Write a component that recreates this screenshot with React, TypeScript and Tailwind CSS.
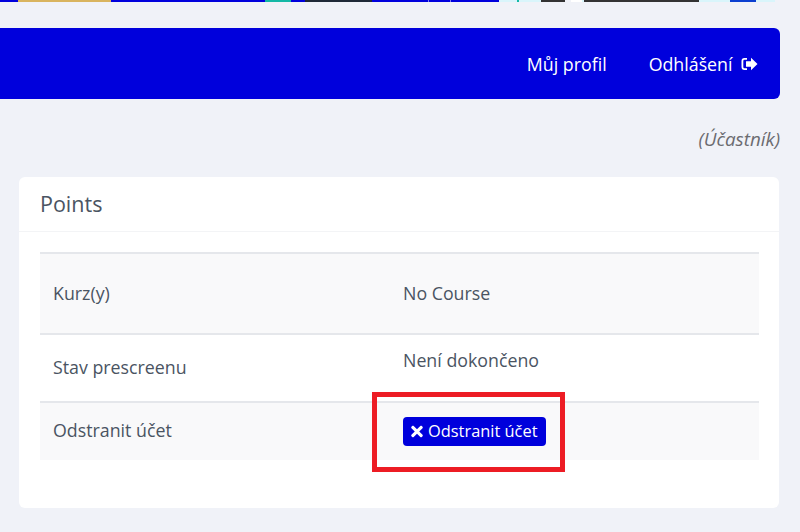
import { FaTimes } from "react-icons/fa";

const strip = [
  { w: 18, c: "#0000dc" },
  { w: 93, c: "#d9b45f" },
  { w: 154, c: "#0000dc" },
  { w: 26, c: "#14b8a6" },
  { w: 14, c: "#0000dc" },
  { w: 67, c: "#1f2937" },
  { w: 56, c: "#0000dc" },
  { w: 1, c: "#8080ee" },
  { w: 21, c: "#0000dc" },
  { w: 1, c: "#8080ee" },
  { w: 48, c: "#0000dc" },
  { w: 18, c: "#d9f5fb" },
  { w: 2, c: "#14b8a6" },
  { w: 22, c: "#d9f5fb" },
  { w: 24, c: "#333333" },
  { w: 6, c: "#f0f2f8" },
  { w: 11, c: "#ffffff" },
  { w: 2, c: "#d9f5fb" },
  { w: 115, c: "#333333" },
  { w: 31, c: "#d9f5fb" },
  { w: 26, c: "#0b3fd0" },
  { w: 19, c: "#d9f5fb" },
];

function LogoutIcon() {
  return (
    <svg viewBox="0 0 17 14" className="ml-[8px] h-[14px] w-[17px]" fill="currentColor">
      <path d="M6 1H3.500A3 3 0 0 0 .5 4v6a3 3 0 0 0 3 3H6v-1.800H3.500A1.200 1.200 0 0 1 2.300 10V4a1.200 1.200 0 0 1 1.200-1.200H6z" />
      <path d="M10 .8 16.500 7 10 13.200V9.800H5V4.200h5z" />
    </svg>
  );
}

export default function App() {
  return (
    <div className="relative h-[532px] w-[800px] overflow-hidden bg-[#f0f2f8] font-['Open_Sans','Noto_Sans',sans-serif] text-[17.8px] text-[#4a5462]">
      <div className="flex h-[2px]">
        {strip.map((s, i) => (
          <div key={i} className="h-full" style={{ width: s.w, backgroundColor: s.c }} />
        ))}
      </div>

      <header className="mt-[26px] mr-[20.5px] flex h-[71px] items-center justify-end rounded-r-md bg-[#0000dc] pt-[1px] pr-[22px] text-white">
        <a className="mr-[42px]">Můj profil</a>
        <a className="flex items-center">
          Odhlášení
          <LogoutIcon />
        </a>
      </header>

      <p className="mt-[29px] mr-[20px] text-right text-[18.8px] italic leading-[22px] text-[#6b6b70]">(Účastník)</p>

      <section className="mr-[21px] ml-[19px] mt-[27px] h-[331px] rounded-md bg-white">
        <h2 className="flex h-[55px] items-center border-b border-[#f3f4f6] px-[21px] text-[21.5px]">Points</h2>
        <div className="pr-[20px] pl-[21px] pt-[20px]">
          <table className="w-full border-collapse">
            <tbody>
              <tr className="h-[81px] border-y-2 border-[#e5e7eb] bg-[#f9f9fa]">
                <td className="w-[363px] pl-[13px]">Kurz(y)</td>
                <td>No Course</td>
              </tr>
              <tr className="h-[68px]">
                <td className="pl-[13px] pb-[1px]">Stav prescreenu</td>
                <td className="pb-[16px]">Není dokončeno</td>
              </tr>
              <tr className="h-[58px] border-t-2 border-[#e5e7eb] bg-[#f9f9fa]">
                <td className="pl-[13px] pb-[3px]">Odstranit účet</td>
                <td>
                  <button className="flex h-[29px] w-[143px] items-center gap-[5px] rounded-[4px] bg-[#0000dc] pl-[8px] text-[16.4px] whitespace-nowrap text-white">
                    <FaTimes className="h-[17px] w-[12px]" />
                    Odstranit účet
                  </button>
                </td>
              </tr>
            </tbody>
          </table>
        </div>
      </section>

      <div className="absolute left-[372px] top-[392px] h-[80px] w-[193px] border-[5px] border-[#ed1c24]" />
    </div>
  );
}
